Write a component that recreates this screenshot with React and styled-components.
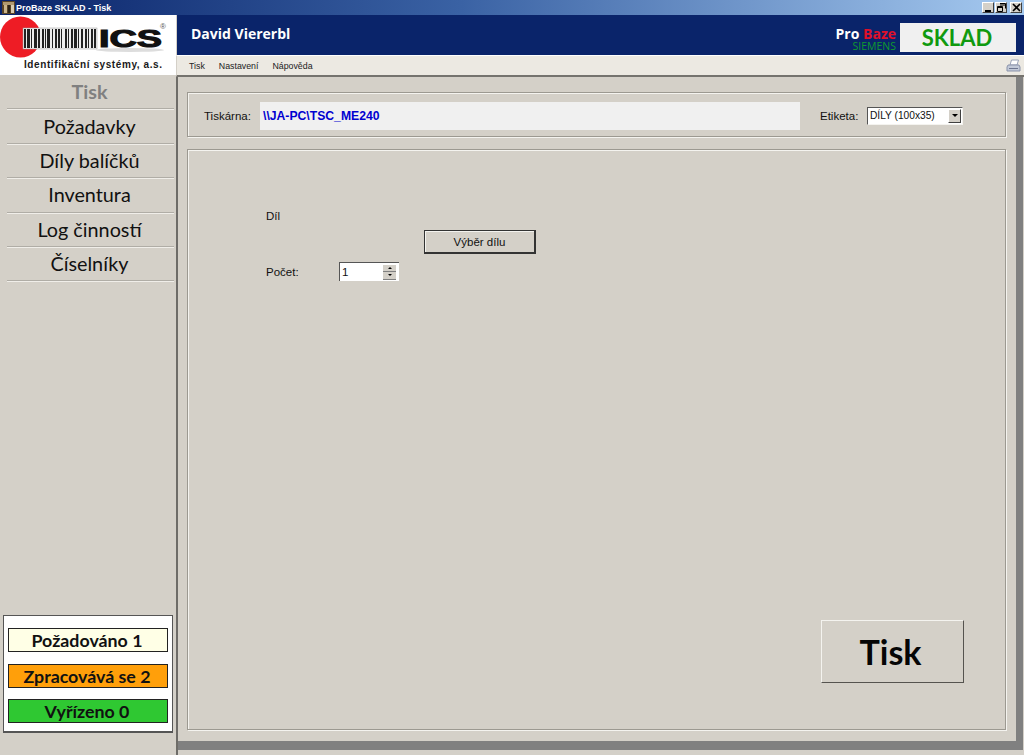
import React from "react";
import styled, { createGlobalStyle } from "styled-components";

const GlobalStyle = createGlobalStyle`
    html, body { margin: 0; padding: 0; background: #d4d0c8; }
    * { box-sizing: border-box; }
`;

const NAV_ITEMS = ["Požadavky", "Díly balíčků", "Inventura", "Log činností", "Číselníky"];
const BARCODE = [2,1,3,1,1,2,3,1,2,2,2,1,1,1,3,2,1,2,2,1,2,1,1,3,2,1,1,2,2,1,3,1,1,2,2,2,2,1,1,2,2,1,2];

function Logo() {
    let x = 24;
    const bars = BARCODE.map((w, i) => {
        const bar = i % 2 === 0 ? <rect key={i} x={x} y="14" width={w} height="19" fill="#222" /> : null;
        x += w;
        return bar;
    });
    return (
        <svg width="176" height="60" viewBox="0 0 176 60">
            <ellipse cx="130" cy="35" rx="34" ry="2" fill="#ddd" />
            <circle cx="20.5" cy="22" r="20.5" fill="#ee1c25" />
            <rect x="23" y="13" width="74" height="21" fill="#eeeeee" stroke="#999" strokeWidth="0.5" />
            {bars}
            <text x="99" y="32" fontFamily="Liberation Sans" fontWeight="700" fontSize="24" textLength="63" lengthAdjust="spacingAndGlyphs" stroke="#111" strokeWidth="1.1" fill="#111">ICS</text>
            <text x="160" y="14" fontFamily="Liberation Sans" fontSize="8" fill="#555">®</text>
            <text x="24" y="53" fontFamily="Liberation Sans" fontWeight="700" fontSize="10" textLength="138" lengthAdjust="spacing" fill="#1a1a1a">Identifikační systémy, a.s.</text>
        </svg>
    );
}

function AppIcon() {
    return (
        <svg width="13" height="13" viewBox="0 0 13 13">
            <rect width="13" height="13" fill="#5a4526" />
            <rect x="1" y="1" width="11" height="3" fill="#b09a70" />
            <rect x="2" y="4" width="3" height="8" fill="#c9b48a" />
            <rect x="6" y="4" width="2" height="8" fill="#2c2418" />
            <rect x="9" y="4" width="3" height="8" fill="#d8cdb0" />
        </svg>
    );
}

function PrinterIcon() {
    return (
        <svg width="15" height="14" viewBox="0 0 15 14">
            <path d="M5.5 1h7l-1.5 5H4z" fill="#fff" stroke="#9aa3b8" />
            <path d="M2 6h11l1 2v4H1V8z" fill="#c2c9d8" stroke="#8a93aa" />
            <rect x="3" y="9" width="9" height="1" fill="#6d7690" />
        </svg>
    );
}

function WinGlyph({ kind }) {
    return (
        <svg width="9" height="9" viewBox="0 0 9 9">
            {kind === "min" && <rect x="1" y="7" width="6" height="2" fill="#000" />}
            {kind === "restore" && <path d="M3 0.5h5.5v5M3 2h5M0.5 3.5h5v5h-5zM0.5 4.5h5" fill="none" stroke="#000" />}
            {kind === "close" && <path d="M1 1l7 7M8 1l-7 7" fill="none" stroke="#000" strokeWidth="1.6" />}
        </svg>
    );
}

export default function App() {
    return (
        <Page>
            <GlobalStyle />
            <TitleBar>
                <AppIcon />
                <TitleText>ProBaze SKLAD - Tisk</TitleText>
                <WinButtons>
                    <WinButton><WinGlyph kind="min" /></WinButton>
                    <WinButton><WinGlyph kind="restore" /></WinButton>
                    <WinButton $gap><WinGlyph kind="close" /></WinButton>
                </WinButtons>
            </TitleBar>
            <Body>
                <Sidebar>
                    <LogoBox><Logo /></LogoBox>
                    <Nav>
                        <NavItem $active>Tisk</NavItem>
                        {NAV_ITEMS.map((item) => <NavItem key={item}>{item}</NavItem>)}
                    </Nav>
                    <StatusBox>
                        <StatusRow $bg="#ffffe6">Požadováno 1</StatusRow>
                        <StatusRow $bg="#ff9f0a">Zpracovává se 2</StatusRow>
                        <StatusRow $bg="#2fc832">Vyřízeno 0</StatusRow>
                    </StatusBox>
                </Sidebar>
                <Main>
                    <Header>
                        <UserName>David Viererbl</UserName>
                        <Brand>
                            <BrandName>Pro <BrandRed>Baze</BrandRed></BrandName>
                            <BrandSub>SIEMENS</BrandSub>
                        </Brand>
                        <SkladBox>SKLAD</SkladBox>
                    </Header>
                    <MenuBar>
                        <MenuItem>Tisk</MenuItem>
                        <MenuItem>Nastavení</MenuItem>
                        <MenuItem>Nápověda</MenuItem>
                        <PrinterSlot><PrinterIcon /></PrinterSlot>
                    </MenuBar>
                    <Workspace>
                        <Content>
                            <PrinterGroup>
                                <FieldLabel>Tiskárna:</FieldLabel>
                                <PrinterField>\\JA-PC\TSC_ME240</PrinterField>
                                <LabelCaption>Etiketa:</LabelCaption>
                                <Select>
                                    <SelectValue>DÍLY (100x35)</SelectValue>
                                    <SelectArrow><ArrowDown /></SelectArrow>
                                </Select>
                            </PrinterGroup>
                            <FormGroup>
                                <PartLabel>Díl</PartLabel>
                                <PickButton>Výběr dílu</PickButton>
                                <CountRow>
                                    <CountLabel>Počet:</CountLabel>
                                    <Spinner>
                                        <SpinnerValue>1</SpinnerValue>
                                        <SpinnerButtons>
                                            <SpinButton><ArrowUp /></SpinButton>
                                            <SpinButton><ArrowDown $small /></SpinButton>
                                        </SpinnerButtons>
                                    </Spinner>
                                </CountRow>
                                <PrintButton>Tisk</PrintButton>
                            </FormGroup>
                        </Content>
                    </Workspace>
                </Main>
            </Body>
        </Page>
    );
}

const Page = styled.div`
    width: 1024px;
    height: 755px;
    display: flex;
    flex-direction: column;
    overflow: hidden;
    background: #d4d0c8;
    font-family: "Liberation Sans", Arial, sans-serif;
    font-size: 11.5px;
    color: #111;
`;

const TitleBar = styled.div`
    height: 15px;
    flex: none;
    display: flex;
    align-items: center;
    padding-left: 2px;
    background: linear-gradient(90deg, #0a246a 0%, #3a62a4 45%, #a6caf0 100%);
`;

const TitleText = styled.div`
    margin-left: 1px;
    color: #fff;
    font-size: 9px;
    font-weight: 700;
`;

const WinButtons = styled.div`
    margin-left: auto;
    margin-right: 2px;
    display: flex;
`;

const WinButton = styled.div`
    width: 12px;
    height: 11px;
    margin-left: ${(p) => (p.$gap ? "3px" : "1px")};
    display: flex;
    align-items: center;
    justify-content: center;
    background: #d4d0c8;
    border: 1px solid;
    border-color: #fff #404040 #404040 #fff;
`;

const Body = styled.div`
    flex: 1;
    display: flex;
    min-height: 0;
`;

const Sidebar = styled.div`
    width: 176px;
    flex: none;
    display: flex;
    flex-direction: column;
`;

const LogoBox = styled.div`
    height: 60px;
    background: #fff;
    line-height: 0;
`;

const Nav = styled.div`
    padding: 0 2px 0 7px;
`;

const NavItem = styled.div`
    height: 34.4px;
    display: flex;
    align-items: center;
    justify-content: center;
    padding: 0 2px 1px 0;
    border-bottom: 1px solid #b0ada6;
    box-shadow: 0 1px 0 #f0eee9;
    font-family: Lato, "Open Sans", sans-serif;
    font-size: 19.8px;
    font-weight: ${(p) => (p.$active ? 700 : 400)};
    color: ${(p) => (p.$active ? "#808080" : "#111")};
`;

const StatusBox = styled.div`
    margin: auto 3px 22px 3px;
    height: 118px;
    padding: 12px 4px 0;
    display: flex;
    flex-direction: column;
    gap: 11.5px;
    background: #fff;
    border: 1px solid #555;
    border-bottom-width: 2px;
`;

const StatusRow = styled.div`
    height: 24px;
    display: flex;
    align-items: center;
    justify-content: center;
    padding-right: 2px;
    background: ${(p) => p.$bg};
    border: 1px solid #222;
    font-family: Lato, "Open Sans", sans-serif;
    font-size: 17.8px;
    font-weight: 700;
    color: #111;
`;

const Main = styled.div`
    flex: 1;
    min-width: 0;
    display: flex;
    flex-direction: column;
`;

const Header = styled.div`
    height: 40px;
    flex: none;
    display: flex;
    align-items: center;
    padding: 0 8px 0 14px;
    background: #0a246a;
    border-left: 1px solid #d4d0c8;
`;

const UserName = styled.div`
    margin-top: -4px;
    color: #fff;
    font-size: 14px;
    font-weight: 700;
    font-family: "Open Sans", sans-serif;
`;

const Brand = styled.div`
    margin: 8px 0 0 auto;
    display: flex;
    flex-direction: column;
    align-items: flex-end;
`;

const BrandName = styled.div`
    color: #fff;
    font-family: "Open Sans", sans-serif;
    font-size: 14px;
    font-weight: 700;
    line-height: 15px;
`;

const BrandRed = styled.span`
    display: inline-block;
    color: #e0102a;
`;

const BrandSub = styled.div`
    color: #109a30;
    font-family: "Open Sans", sans-serif;
    font-size: 10.5px;
    line-height: 11px;
`;

const SkladBox = styled.div`
    width: 116px;
    height: 29px;
    margin: 5px 0 0 4px;
    display: flex;
    align-items: center;
    justify-content: center;
    padding-right: 2px;
    background: #f0f0f0;
    color: #109a10;
    font-family: Lato, "Open Sans", sans-serif;
    font-size: 22px;
    font-weight: 700;
`;

const MenuBar = styled.div`
    height: 22px;
    flex: none;
    display: flex;
    align-items: center;
    gap: 14px;
    padding: 1px 3px 0 12px;
    background: #ece9e2;
    border-top: 1px solid #fff;
    border-left: 1px solid #d4d0c8;
    border-bottom: 2px solid #75736e;
`;

const MenuItem = styled.div`
    font-size: 8.8px;
    color: #222;
`;

const PrinterSlot = styled.div`
    margin-left: auto;
    line-height: 0;
`;

const Workspace = styled.div`
    flex: 1;
    min-height: 0;
    padding: 0 8px 14px 0;
    border-left: 2px solid #6e6c68;
`;

const Content = styled.div`
    height: 100%;
    display: flex;
    flex-direction: column;
    gap: 12px;
    padding: 15px 10px 11px 9px;
    background: #d4d0c8;
    box-shadow: 7px 0 0 #808080, 7px 9px 0 #808080, 0 9px 0 #808080;
`;

const etched = `
    border: 1px solid #9c9991;
    box-shadow: 1px 1px 0 #f4f3ef, inset 1px 1px 0 #f4f3ef;
`;

const PrinterGroup = styled.div`
    ${etched}
    height: 45px;
    flex: none;
    display: flex;
    align-items: center;
    padding: 2px 42px 0 16px;
`;

const FieldLabel = styled.div`
    width: 56px;
`;

const PrinterField = styled.div`
    width: 540px;
    height: 28px;
    display: flex;
    align-items: center;
    padding-left: 3px;
    background: #f0f0f0;
    color: #0000d0;
    font-size: 12.2px;
    font-weight: 700;
`;

const LabelCaption = styled.div`
    margin-left: 20px;
    width: 47px;
`;

const Select = styled.div`
    width: 96px;
    height: 18px;
    display: flex;
    align-items: center;
    padding: 1px;
    background: #fff;
    border: 1px solid;
    border-color: #555 #f4f3ef #f4f3ef #555;
`;

const SelectValue = styled.div`
    flex: 1;
    padding-left: 1px;
    font-size: 10.2px;
`;

const SelectArrow = styled.div`
    width: 13px;
    height: 14px;
    display: flex;
    align-items: center;
    justify-content: center;
    background: #d4d0c8;
    border: 1px solid;
    border-color: #fff #404040 #404040 #fff;
`;

const ArrowDown = styled.div`
    width: 0;
    height: 0;
    border-left: ${(p) => (p.$small ? "2px" : "3px")} solid transparent;
    border-right: ${(p) => (p.$small ? "2px" : "3px")} solid transparent;
    border-top: ${(p) => (p.$small ? "2px" : "3px")} solid #000;
`;

const ArrowUp = styled.div`
    width: 0;
    height: 0;
    border-left: 2px solid transparent;
    border-right: 2px solid transparent;
    border-bottom: 2px solid #000;
`;

const FormGroup = styled.div`
    ${etched}
    flex: 1;
    min-height: 0;
    display: flex;
    flex-direction: column;
    padding: 60px 41px 46px 78px;
`;

const PartLabel = styled.div`
    height: 13px;
    line-height: 13px;
`;

const PickButton = styled.div`
    width: 112px;
    height: 24px;
    margin: 7px 0 0 158px;
    display: flex;
    align-items: center;
    justify-content: center;
    background: #d4d0c8;
    border: 1px solid #333;
    border-right-width: 2px;
    border-bottom-width: 2px;
    box-shadow: inset 1px 1px 0 #f4f3ef;
`;

const CountRow = styled.div`
    margin-top: 8px;
    display: flex;
    align-items: center;
`;

const CountLabel = styled.div`
    width: 73px;
`;

const Spinner = styled.div`
    width: 60px;
    height: 19px;
    display: flex;
    align-items: center;
    padding: 1px;
    background: #fff;
    border-top: 1px solid #555;
    border-left: 1px solid #555;
`;

const SpinnerValue = styled.div`
    flex: 1;
    padding-left: 1px;
`;

const SpinnerButtons = styled.div`
    width: 13px;
    margin-right: 2px;
    display: flex;
    flex-direction: column;
`;

const SpinButton = styled.div`
    height: 7.5px;
    display: flex;
    align-items: center;
    justify-content: center;
    background: #d4d0c8;
    border-bottom: 1px solid #808080;
`;

const PrintButton = styled.div`
    width: 143px;
    height: 63px;
    margin-top: auto;
    align-self: flex-end;
    display: flex;
    align-items: center;
    justify-content: center;
    padding-right: 4px;
    background: #d4d0c8;
    border: 1px solid;
    border-color: #f4f3ef #55534f #55534f #f4f3ef;
    font-family: Lato, "Open Sans", sans-serif;
    font-size: 34px;
    font-weight: 700;
    color: #050505;
`;
